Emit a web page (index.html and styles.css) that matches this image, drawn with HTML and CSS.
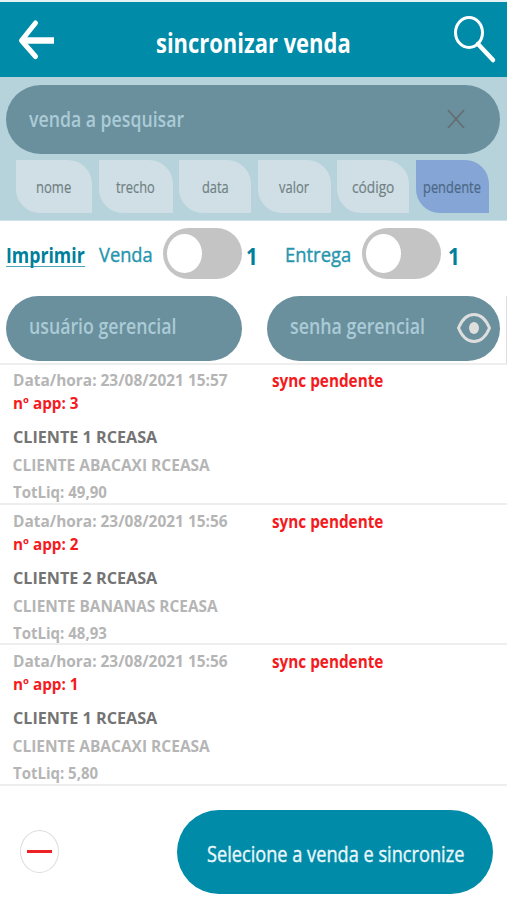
FILE: index.html
```
<!DOCTYPE html>
<html lang="pt-BR">
<head>
<meta charset="utf-8">
<title>sincronizar venda</title>
<link rel="stylesheet" href="styles.css">
</head>
<body>
<header class="topbar">
  <svg class="back" width="38" height="42" viewBox="0 0 38 42" fill="none" stroke="#fff" stroke-width="5" stroke-linecap="round" stroke-linejoin="round"><path d="M18.500 4 4.500 21.500 18.500 37.500"/><path d="M5 21.500H37" stroke-width="6.500" stroke-linecap="butt"/></svg>
  <h1><span data-w="195">sincronizar venda</span></h1>
  <svg class="lens" width="44" height="50" viewBox="0 0 44 50" fill="none" stroke="#fff"><ellipse cx="16" cy="17.500" rx="13.500" ry="15" stroke-width="3"/><path d="M25 29 40 45" stroke-width="4.500" stroke-linecap="round"/></svg>
</header>
<section class="search">
  <div class="field wide"><span data-w="155.500">venda a pesquisar</span>
    <svg width="18" height="20" viewBox="0 0 18 20" stroke="#646c70" stroke-width="1.700"><path d="M1 1 17 19M17 1 1 19"/></svg></div>
  <nav class="chips">
    <div class="chip"><span data-w="35">nome</span></div>
    <div class="chip"><span data-w="38.500">trecho</span></div>
    <div class="chip"><span data-w="26.500">data</span></div>
    <div class="chip"><span data-w="30">valor</span></div>
    <div class="chip"><span data-w="42">código</span></div>
    <div class="chip active"><span data-w="58">pendente</span></div>
  </nav>
</section>
<section class="print">
  <div class="cell title"><b class="under"><span data-w="79">Imprimir</span></b></div>
  <div class="cell label"><span data-w="53.500">Venda</span></div>
  <div class="toggle"><i></i></div>
  <div class="cell count"><span data-w="12">1</span></div>
  <div class="cell label second"><span data-w="66.500">Entrega</span></div>
  <div class="toggle"><i></i></div>
  <div class="cell count last"><span data-w="12">1</span></div>
</section>
<section class="login">
  <div class="field user"><span data-w="147.500">usuário gerencial</span></div>
  <div class="field pass"><span data-w="135">senha gerencial</span>
    <svg width="36" height="34" viewBox="0 0 36 34"><path d="M2.500 17C10-1 26-1 33.500 17 26 35 10 35 2.500 17Z" fill="none" stroke="#dedede" stroke-width="3"/><ellipse cx="18" cy="17" rx="5" ry="6" fill="#dedede"/></svg></div>
</section>
<main>
  <article>
    <div><p class="meta"><span data-w="215">Data/hora: 23/08/2021 15:57</span></p><p class="app"><span data-w="66">nº app: 3</span></p><p class="name"><span data-w="144">CLIENTE 1 RCEASA</span></p><p class="company"><span data-w="197">CLIENTE ABACAXI RCEASA</span></p><p class="total"><span data-w="94">TotLiq: 49,90</span></p></div>
    <p class="status"><span data-w="111.500">sync pendente</span></p>
  </article>
  <article>
    <div><p class="meta"><span data-w="215">Data/hora: 23/08/2021 15:56</span></p><p class="app"><span data-w="66">nº app: 2</span></p><p class="name"><span data-w="144">CLIENTE 2 RCEASA</span></p><p class="company"><span data-w="205">CLIENTE BANANAS RCEASA</span></p><p class="total"><span data-w="94">TotLiq: 48,93</span></p></div>
    <p class="status"><span data-w="111.500">sync pendente</span></p>
  </article>
  <article>
    <div><p class="meta"><span data-w="215">Data/hora: 23/08/2021 15:56</span></p><p class="app"><span data-w="66">nº app: 1</span></p><p class="name"><span data-w="144">CLIENTE 1 RCEASA</span></p><p class="company"><span data-w="197">CLIENTE ABACAXI RCEASA</span></p><p class="total"><span data-w="85">TotLiq: 5,80</span></p></div>
    <p class="status"><span data-w="111.500">sync pendente</span></p>
  </article>
</main>
<footer>
  <div class="minus"><i></i></div>
  <div class="button"><span data-w="257">Selecione a venda e sincronize</span></div>
</footer>
<script src="script.js"></script>
</body>
</html>
```
FILE: styles.css
```
* { box-sizing: border-box; }
body { margin: 0; width: 507px; height: 900px; overflow: hidden; background: #fff; font-family: "Open Sans", "Noto Sans", sans-serif; }
h1, p { margin: 0; }
svg { display: block; flex: none; }
span { display: inline-block; white-space: nowrap; transform-origin: 0 50%; }

.topbar { display: flex; align-items: flex-start; height: 77px; border-top: 2.500px solid #e4f1f5; background: #008ba9; color: #fff; }
.back { margin: 17px 0 0 17px; }
.topbar h1 { margin: 23px 0 0 100.500px; width: 195px; font-size: 26px; font-weight: 700; line-height: 36px; }
.lens { margin: 13px 0 0 102.500px; }

.search { height: 144px; padding: 8px 7px 0 6px; background: #b6d2db; border-bottom: 1px solid #cfe1e8; }
.field { display: flex; align-items: center; background: #6a909e; color: #abcbd6; font-size: 21.500px; font-weight: 600; line-height: 30px; }
.wide { height: 68.500px; border-radius: 35px; padding: 0 35px 0 23px; justify-content: space-between; }
.wide svg { margin-top: -1px; }
.chips { display: grid; grid-template-columns: 76px 74px 72px 73px 72px 73px; gap: 6.500px; padding: 6.500px 0 0 10px; }
.chip { height: 53px; display: flex; align-items: center; justify-content: center; background: #cfdfe5; border-radius: 0 24px 0 24px; color: #717f84; font-size: 16px; line-height: 22px; -webkit-text-stroke: 0.200px; }
.active { background: #84a5d5; color: #4b6886; }

.print { display: flex; height: 75px; padding: 7px 0 0 6px; align-items: flex-start; color: #007f9c; }
.cell { height: 52px; line-height: 52px; font-size: 20.500px; }
.title { width: 93px; font-size: 21.500px; padding-top: 1px; }
.under { display: block; width: 79px; height: 38px; line-height: 51px; border-bottom: 1.500px solid #4da5b9; }
.label { width: 64px; color: #2795ae; -webkit-text-stroke: 0.400px; line-height: 53px; }
.toggle { width: 79px; height: 51px; border-radius: 26px; background: #c4c4c4; padding: 6px 4px; }
.toggle i { display: block; width: 35px; height: 39px; border-radius: 50%; background: #fff; }
.count { width: 42.500px; padding-left: 4px; font-size: 24px; font-weight: 700; line-height: 56px; }
.last { padding-left: 7px; }
.second { width: 77.500px; }

.login { display: flex; gap: 25px; height: 69px; padding-left: 6px; border-bottom: 2px solid #eee; border-right: 1px solid #ddd; }
.login .field { height: 65px; border-radius: 33px; padding-left: 23px; padding-bottom: 5px; }
.user { width: 236px; }
.pass { width: 233px; justify-content: space-between; padding-right: 8px; }
.pass svg { margin-top: 4px; }

article { display: flex; height: 140.700px; border-bottom: 2px solid #eee; padding-left: 12.500px; font-weight: 700; color: #b5b5b5; font-size: 15.500px; line-height: 22px; }
main { height: 422px; margin-top: -1px; }
article > div { width: 259px; padding-top: 5px; }
.app { color: #f51a1d; margin-top: 1px; }
.name { color: #747474; font-size: 16.500px; margin-top: 12px; }
.company { margin-top: 6px; }
.total { margin-top: 5px; }
.status { color: #f51a1d; font-size: 17px; padding-top: 6px; }

footer { display: flex; height: 114px; align-items: flex-start; padding: 23.500px 0 0 20px; }
.minus { width: 39px; height: 43px; margin-top: 20px; border: 1px solid #ddd; border-radius: 50%; display: flex; align-items: center; justify-content: center; }
.minus i { width: 25px; height: 3px; background: #ef2223; }
.button { width: 316.500px; height: 84px; margin-left: 117.500px; padding: 2px 0 0 30px; border-radius: 42px; background: #008ba9; color: #e9f7fb; display: flex; align-items: center; font-size: 22px; -webkit-text-stroke: 0.400px; }
```
FILE: script.js
```
document.querySelectorAll("[data-w]").forEach(function (el) {
  var target = parseFloat(el.dataset.w);
  var natural = el.offsetWidth;
  el.style.transform = "scaleX(" + target / natural + ")";
  el.style.marginRight = (target - natural) + "px";
});
```
